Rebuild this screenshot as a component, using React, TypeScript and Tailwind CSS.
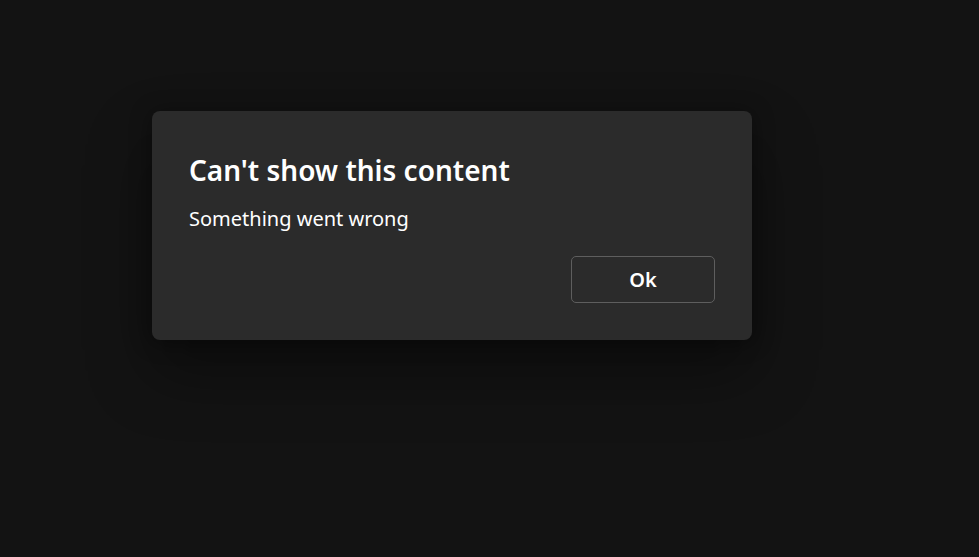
export default function App() {
  return (
    <div className="min-h-screen h-[557px] bg-[#131313] text-white" style={{ fontFamily: '"Noto Sans", sans-serif' }}>
      <div className="flex pt-[111px] pl-[152px]">
        <div className="w-[600px] h-[229px] rounded-lg bg-[#2b2b2b] shadow-[0_32px_64px_rgba(0,0,0,0.37),0_2px_21px_rgba(0,0,0,0.37)] px-[37px] pt-[40px] flex flex-col">
          <h1 className="text-[28px] leading-[38px] font-semibold">Can't show this content</h1>
          <p className="mt-[16px] text-[20px] leading-[28px]">Something went wrong</p>
          <div className="mt-[23px] flex justify-end">
            <button className="w-[144px] h-[47px] rounded-[5px] border border-[#5e5e5e] bg-transparent text-[20px] font-semibold text-white">
              Ok
            </button>
          </div>
        </div>
      </div>
    </div>
  );
}
